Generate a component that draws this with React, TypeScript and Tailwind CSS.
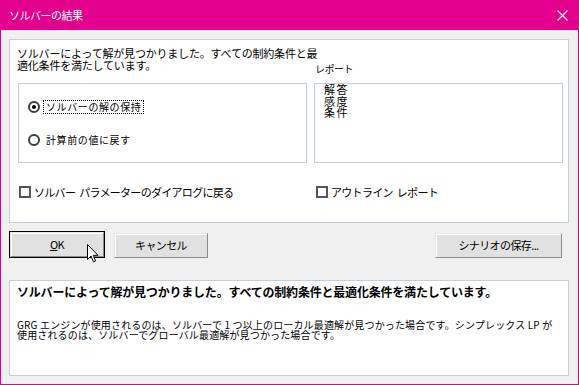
import React from "react";

const FONT = { fontFamily: '"Noto Sans CJK JP", "Noto Sans", sans-serif' };

function Radio({ checked, label, focused }: { checked?: boolean; label: string; focused?: boolean }) {
  return (
    <div className="flex h-[14px] items-center">
      <span className="flex h-[12px] w-[12px] items-center justify-center rounded-full border-[2px] border-[#3c3c3c] bg-white">
        {checked && <span className="h-[4px] w-[4px] rounded-full bg-black" />}
      </span>
      <span
        className={`ml-[3px] px-[2px] text-[10px] leading-[12px] tracking-[0.6px] ${
          focused ? "border border-dotted border-black" : "border border-transparent"
        }`}
      >
        {label}
      </span>
    </div>
  );
}

function Check({ label }: { label: React.ReactNode }) {
  return (
    <div className="flex items-center">
      <span className="h-[12px] w-[12px] border-[2px] border-[#555] bg-white" />
      <span className="ml-[3px] text-[11px] leading-[14px] tracking-[-0.7px]">{label}</span>
    </div>
  );
}

function Btn({ children, def, w }: { children: React.ReactNode; def?: boolean; w: string }) {
  return (
    <button
      type="button"
      className={`${w} h-[27px] ${def ? "border border-black" : "border border-transparent"} p-0`}
    >
      <div className="flex h-full w-full items-center justify-center border border-t-[#e8e8e8] border-l-[#e8e8e8] border-b-[#8c8c8c] border-r-[#8c8c8c] bg-[#e1e1e1] text-[11px] tracking-[-0.6px] shadow-[inset_1px_1px_0_#fff]">
        {children}
      </div>
    </button>
  );
}

export default function App() {
  return (
    <div className="flex h-[385px] w-[579px] flex-col border border-t-0 border-[#e3008c] bg-[#f0f0f0] text-black" style={FONT}>
      <div className="-mx-px flex h-[30px] items-center justify-between bg-[#e3008c] pl-[9px] pr-[11px] text-white">
        <span className="text-[11px] tracking-[-0.5px]">ソルバーの結果</span>
        <svg width="11" height="11" viewBox="0 0 11 11">
          <path d="M0.5 0.5 L10.5 10.5 M10.5 0.5 L0.5 10.5" stroke="#fff" strokeWidth="1.2" />
        </svg>
      </div>

      <div className="ml-[8px] mr-[9px] mt-[9px] h-[184px] border border-[#c2cfdb] bg-white pl-[8px] pt-[7px]">
        <div className="grid grid-cols-[289px_249px] gap-x-[7px]">
          <div className="col-span-2 -ml-px whitespace-nowrap text-[11px] leading-[12px] tracking-[-0.2px]">
            ソルバーによって解が見つかりました。すべての制約条件と最
          </div>
          <div className="-ml-px whitespace-nowrap text-[11px] leading-[12px] tracking-[-0.2px]">
            適化条件を満たしています。
          </div>
          <div className="ml-px pt-[5px] text-[10px] leading-[10px] tracking-[-0.5px]">レポート</div>

          <div className="mt-[9px] flex h-[80px] flex-col gap-[19px] border border-[#c2cfdb] pl-[9px] pt-[16px]">
            <Radio checked focused label="ソルバーの解の保持" />
            <Radio label="計算前の値に戻す" />
          </div>
          <div className="mt-[9px] h-[80px] border border-[#c2cfdb] pl-[9px] pt-0 text-[11px] leading-[11.5px] tracking-[1.5px]">
            <div>解答</div>
            <div>感度</div>
            <div>条件</div>
          </div>

          <div className="ml-px mt-[22px]">
            <Check
              label={
                <>
                  ソルバー<span className="inline-block w-[4px]" />パラメーターのダイアログに戻る
                </>
              }
            />
          </div>
          <div className="ml-[2px] mt-[22px]">
            <Check
              label={
                <>
                  アウトライン<span className="inline-block w-[4px]" />レポート
                </>
              }
            />
          </div>
        </div>
      </div>

      <div className="relative ml-[8px] mr-[15px] mt-[8px] flex">
        <Btn def w="w-[96px]">
          <span>
            <span className="underline">O</span>K
          </span>
        </Btn>
        <div className="ml-[8px]">
          <Btn w="w-[96px]">キャンセル</Btn>
        </div>
        <div className="ml-auto">
          <Btn w="w-[129px]">シナリオの保存...</Btn>
        </div>
        <svg className="absolute left-[78px] top-[13px]" width="12" height="19" viewBox="0 0 12 19">
          <path d="M0.5 0.5 L0.5 15.5 L4 12 L6.5 17.8 L8.6 16.9 L6.2 11.3 L11 11.3 Z" fill="#fff" stroke="#000" strokeWidth="1" strokeLinejoin="miter" />
        </svg>
      </div>

      <div className="ml-[8px] mr-[9px] mt-[21px] h-[96px] border border-[#c2cfdb] bg-white pl-[7px] pt-[4px]">
        <div className="whitespace-nowrap text-[12px] font-bold leading-[14px] tracking-[-0.2px]">
          ソルバーによって解が見つかりました。すべての制約条件と最適化条件を満たしています。
        </div>
        <div className="mt-[21px] whitespace-nowrap text-[10px] leading-[10.5px] tracking-[0.15px]">
          GRG エンジンが使用されるのは、ソルバーで 1 つ以上のローカル最適解が見つかった場合です。シンプレックス LP が
          <br />
          使用されるのは、ソルバーでグローバル最適解が見つかった場合です。
        </div>
      </div>
    </div>
  );
}
